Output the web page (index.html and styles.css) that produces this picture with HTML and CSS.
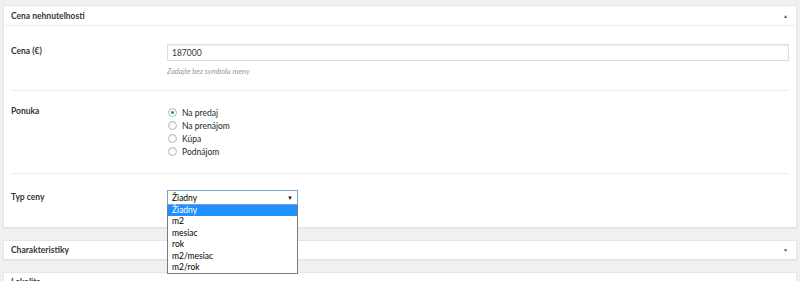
FILE: index.html
```html
<!DOCTYPE html>
<html lang="sk">
  <head>
    <meta charset="UTF-8" />
    <meta name="viewport" content="width=device-width, initial-scale=1.0" />
    <title>Cena nehnuteľnosti</title>
    <link rel="stylesheet" href="styles.css">
  </head>
  <body>
    <div class="postbox">
      <div class="postbox-head">
        <h2 class="postbox-title">Cena nehnuteľnosti</h2>
        <span class="toggle">&#9650;</span>
      </div>
      <div class="postbox-body">
        <div class="field-row row-price">
          <label class="field-label">Cena (€)</label>
          <div class="field-input">
            <input type="text" class="text-input" value="187000" />
            <p class="hint">Zadajte bez symbolu meny</p>
          </div>
        </div>

        <div class="field-row row-offer">
          <label class="field-label">Ponuka</label>
          <div class="field-input radio-list">
            <label class="radio"><span class="radio-dot checked"></span>Na predaj</label>
            <label class="radio"><span class="radio-dot"></span>Na prenájom</label>
            <label class="radio"><span class="radio-dot"></span>Kúpa</label>
            <label class="radio"><span class="radio-dot"></span>Podnájom</label>
          </div>
        </div>

        <div class="field-row row-type">
          <label class="field-label">Typ ceny</label>
          <div class="field-input">
            <div class="select-wrap">
              <div class="select-box">Žiadny<span class="select-arrow">&#9660;</span></div>
              <ul class="select-list">
                <li class="selected">Žiadny</li>
                <li>m2</li>
                <li>mesiac</li>
                <li>rok</li>
                <li>m2/mesiac</li>
                <li>m2/rok</li>
              </ul>
            </div>
          </div>
        </div>
      </div>
    </div>

    <div class="postbox closed">
      <div class="postbox-head">
        <h2 class="postbox-title">Charakteristiky</h2>
        <span class="toggle">&#9660;</span>
      </div>
    </div>

    <div class="postbox closed">
      <div class="postbox-head">
        <h2 class="postbox-title">Lokalita</h2>
        <span class="toggle">&#9660;</span>
      </div>
    </div>
  </body>
</html>
```

FILE: styles.css
```css
* {
  box-sizing: border-box;
}

body {
  margin: 0;
  padding: 5px 3px 0;
  background: #f1f1f1;
  font-family: 'Lato', 'Noto Sans', sans-serif;
  font-size: 8.5px;
  color: #23282d;
  overflow: hidden;
}

.postbox {
  background: #fff;
  border: 1px solid #e5e5e5;
  box-shadow: 0 1px 1px rgba(0, 0, 0, 0.04);
  margin-bottom: 12px;
}
.postbox-head {
  display: flex;
  align-items: center;
  justify-content: space-between;
  height: 20px;
  padding: 0 8px 0 7px;
  border-bottom: 1px solid #eee;
}
.closed .postbox-head {
  height: 18px;
  border-bottom: 0;
}
.postbox-title {
  margin: 0;
  font-size: 8.5px;
  font-weight: 700;
  color: #32373c;
}
.toggle {
  font-size: 5px;
  color: #555;
}

.postbox-body {
  padding: 0 7px;
}
.field-row {
  display: flex;
  border-bottom: 1px solid #eee;
}
.field-row:last-child {
  border-bottom: 0;
}
.field-label {
  width: 156px;
  flex-shrink: 0;
  font-weight: 700;
  color: #32373c;
}
.field-input {
  flex: 1;
}

.row-price {
  padding-top: 18px;
  height: 65px;
}
.row-price .field-label {
  padding-top: 2px;
}
.text-input {
  display: block;
  width: 100%;
  height: 17px;
  padding: 0 4px;
  border: 1px solid #ddd;
  box-shadow: inset 0 1px 2px rgba(0, 0, 0, 0.07);
  font-family: inherit;
  font-size: 8.5px;
  color: #32373c;
}
.hint {
  margin: 6px 0 0;
  font-style: italic;
  font-size: 7.5px;
  color: #999;
}

.row-offer {
  height: 83px;
  padding-top: 15px;
}
.radio-list {
  display: flex;
  flex-direction: column;
}
.radio {
  display: flex;
  align-items: center;
  height: 13px;
  padding-left: 1px;
}
.radio-dot {
  width: 9px;
  height: 9px;
  border: 1px solid #b4b9be;
  border-radius: 50%;
  margin-right: 5px;
  box-shadow: inset 0 1px 2px rgba(0, 0, 0, 0.1);
  display: flex;
  align-items: center;
  justify-content: center;
}
.radio-dot.checked::after {
  content: '';
  width: 3px;
  height: 3px;
  border-radius: 50%;
  background: #1e8cbe;
}

.row-type {
  height: 53px;
  padding-top: 16px;
}
.row-type .field-label {
  padding-top: 2px;
}
.select-wrap {
  position: relative;
  width: 131px;
}
.select-box {
  display: flex;
  justify-content: space-between;
  align-items: center;
  height: 15px;
  padding: 0 4px;
  border: 1px solid #7e9fc9;
  color: #000;
}
.select-arrow {
  font-size: 6px;
  color: #111;
}
.select-list {
  position: absolute;
  top: 15px;
  left: 0;
  right: 0;
  margin: 0;
  padding: 0;
  list-style: none;
  background: #fff;
  border: 1px solid #7a7a7a;
  border-top: 0;
  color: #000;
  z-index: 2;
}
.select-list li {
  height: 11.4px;
  line-height: 11.4px;
  padding-left: 4px;
}
.select-list .selected {
  background: #1e90ff;
  color: #fff;
}
```
